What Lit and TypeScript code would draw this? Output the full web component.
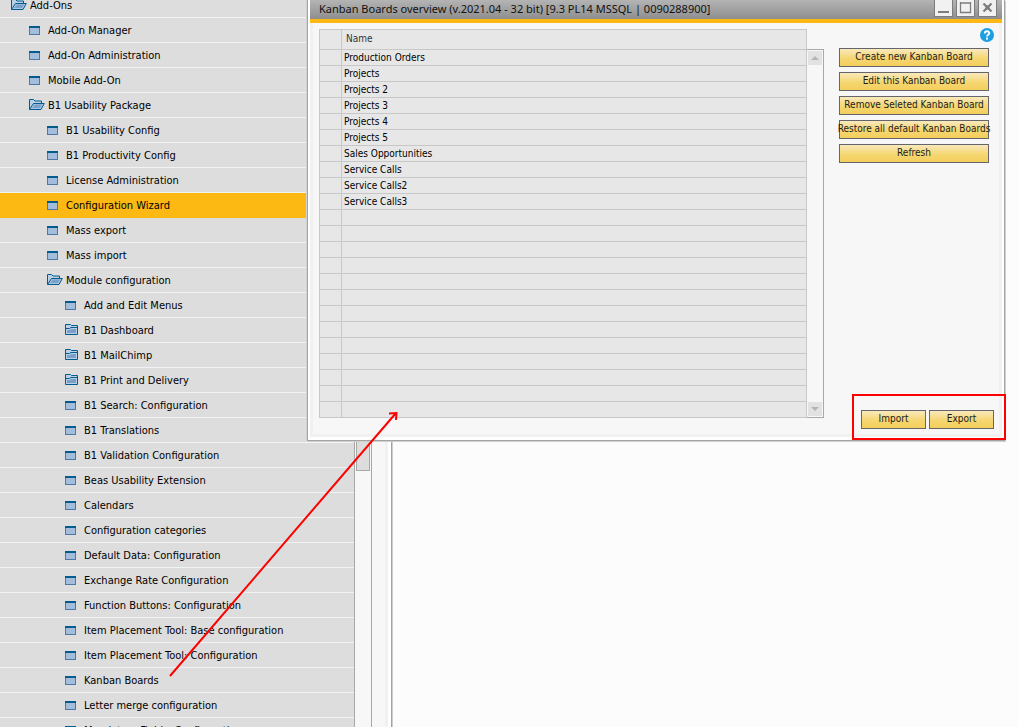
import { LitElement, html, css, svg, nothing } from "lit";
import { customElement, state, property } from "lit/decorators.js";
import { classMap } from "lit/directives/class-map.js";

type Kind = "form" | "folder" | "open";
interface MenuEntry {
  label: string;
  level: number;
  kind: Kind;
}

const entry = (level: number, label: string, kind: Kind = "form"): MenuEntry => ({ level, label, kind });

const MENU: MenuEntry[] = [
  entry(0, "Add-Ons", "open"),
  entry(1, "Add-On Manager"),
  entry(1, "Add-On Administration"),
  entry(1, "Mobile Add-On"),
  entry(1, "B1 Usability Package", "open"),
  entry(2, "B1 Usability Config"),
  entry(2, "B1 Productivity Config"),
  entry(2, "License Administration"),
  entry(2, "Configuration Wizard"),
  entry(2, "Mass export"),
  entry(2, "Mass import"),
  entry(2, "Module configuration", "open"),
  entry(3, "Add and Edit Menus"),
  entry(3, "B1 Dashboard", "folder"),
  entry(3, "B1 MailChimp", "folder"),
  entry(3, "B1 Print and Delivery", "folder"),
  entry(3, "B1 Search: Configuration"),
  entry(3, "B1 Translations"),
  entry(3, "B1 Validation Configuration"),
  entry(3, "Beas Usability Extension"),
  entry(3, "Calendars"),
  entry(3, "Configuration categories"),
  entry(3, "Default Data: Configuration"),
  entry(3, "Exchange Rate Configuration"),
  entry(3, "Function Buttons: Configuration"),
  entry(3, "Item Placement Tool: Base configuration"),
  entry(3, "Item Placement Tool: Configuration"),
  entry(3, "Kanban Boards"),
  entry(3, "Letter merge configuration"),
  entry(3, "Mandatory Fields: Configuration"),
];

const BOARDS = [
  "Production Orders",
  "Projects",
  "Projects 2",
  "Projects 3",
  "Projects 4",
  "Projects 5",
  "Sales Opportunities",
  "Service Calls",
  "Service Calls2",
  "Service Calls3",
];
const GRID_ROWS = 23;

const ICONS = {
  form: svg`<rect x="0.5" y="2.5" width="10" height="8" fill="#a3bedd" stroke="#4f78a5"/>
    <rect x="0" y="2" width="11" height="2" fill="#005b8f"/>`,
  folder: svg`<path d="M0.5 10.5V0.5H5.5L6.5 1.5H12.5V10.5Z" fill="#b9d0e6" stroke="#005b8f"/>
    <path d="M0.5 4.5H4.5L6 3.5H12.5" fill="none" stroke="#005b8f"/>
    <path d="M2 9V6H5L6 5H11V9Z" fill="#7a9fc9"/>`,
  open: svg`<path d="M0.5 10.5V0.5H4.5L6 2H12.5V4" fill="#b9d0e6" stroke="#005b8f"/>
    <path d="M0.5 10.5L4.5 4.5H15.3L12 10.5Z" fill="#a9c6e2" stroke="#005b8f"/>
    <path d="M3 9L6 5.5H13L11 9Z" fill="#7a9fc9"/>`,
};

@customElement("menu-tree")
class MenuTree extends LitElement {
  @state() private selected = "Configuration Wizard";

  static styles = css`
    :host {
      display: block;
      overflow: hidden;
      background: #dddddd;
      font: 11px/22px "DejaVu Sans Condensed", "DejaVu Sans", sans-serif;
    }
    ul {
      list-style: none;
      margin: -7px 0 0;
      padding: 0;
    }
    li {
      border-bottom: 1px solid #f2f2f2;
    }
    button {
      display: flex;
      align-items: center;
      width: 100%;
      height: 24px;
      padding: 0;
      border: 0;
      background: none;
      color: #000;
      font: inherit;
      text-align: left;
      white-space: nowrap;
    }
    span {
      padding-top: 2px;
    }
    .level0 {
      padding-left: 11px;
    }
    .level1 {
      padding-left: 29px;
    }
    .level2 {
      padding-left: 47px;
    }
    .level3 {
      padding-left: 65px;
    }
    .selected {
      background: #fcb813;
      border-color: #fcb813;
    }
    svg {
      width: 16px;
      height: 12px;
      margin-right: 3px;
      flex: none;
    }
  `;

  render() {
    return html`<ul>
      ${MENU.map(
        (m) => html`<li class=${classMap({ selected: m.label === this.selected })}>
          <button type="button" class="level${m.level}" @click=${() => (this.selected = m.label)}>
            <svg viewBox="0 0 16 12" aria-hidden="true">${ICONS[m.kind]}</svg>
            <span>${m.label}</span>
          </button>
        </li>`
      )}
    </ul>`;
  }
}

@customElement("gold-button")
class GoldButton extends LitElement {
  @property() label = "";

  static styles = css`
    :host {
      display: block;
    }
    button {
      display: flex;
      justify-content: center;
      width: 100%;
      height: 19px;
      padding: 0;
      border: 1px solid #66666a;
      background: linear-gradient(#f9e9bd, #f5d670 55%, #f3cf5c);
      color: #1c1c1c;
      font: 10px/16px "DejaVu Sans Condensed", "DejaVu Sans", sans-serif;
      white-space: nowrap;
    }
  `;

  render() {
    return html`<button type="button">${this.label}</button>`;
  }
}

@customElement("board-grid")
class BoardGrid extends LitElement {
  static styles = css`
    :host {
      display: flex;
      color: #000;
      font: 10px/15px "DejaVu Sans Condensed", "DejaVu Sans", sans-serif;
    }
    table {
      flex: 1;
      border-collapse: separate;
      border-spacing: 0;
      border: solid #c8c8c8;
      border-width: 1px 0 0 1px;
      background: #e7e7e7;
      table-layout: fixed;
    }
    th,
    td {
      height: 15px;
      padding: 0 2px;
      border: solid #c8c8c8;
      border-width: 0 1px 1px 0;
      text-align: left;
      font-weight: normal;
    }
    th {
      height: 16px;
      padding: 0 4px 3px;
      color: #333;
    }
    .mark {
      width: 21px;
      padding-left: 0;
      padding-right: 0;
    }
    .scroll {
      display: flex;
      flex-direction: column;
      justify-content: space-between;
      width: 14px;
      margin-top: 20px;
      padding: 1px;
      box-sizing: content-box;
      border: solid #a8a8a8;
      border-width: 1px 1px 1px 0;
      background: #f7f7f7;
    }
    .scroll button {
      display: grid;
      place-items: center;
      height: 14px;
      padding: 0;
      border: 0;
      background: #e2e2e2;
    }
    svg {
      width: 8px;
      height: 4px;
      fill: #b5b5b5;
    }
  `;

  render() {
    return html`<table>
        <thead>
          <tr>
            <th class="mark"></th>
            <th scope="col">Name</th>
          </tr>
        </thead>
        <tbody>
          ${Array.from(
            { length: GRID_ROWS },
            (_, i) => html`<tr>
              <td class="mark"></td>
              <td>${BOARDS[i] ?? nothing}</td>
            </tr>`
          )}
        </tbody>
      </table>
      <div class="scroll">
        <button type="button" aria-label="Scroll up"><svg viewBox="0 0 8 4"><path d="M0 4L4 0L8 4Z" /></svg></button>
        <button type="button" aria-label="Scroll down"><svg viewBox="0 0 8 4"><path d="M0 0L4 4L8 0Z" /></svg></button>
      </div>`;
  }
}

@customElement("board-window")
class BoardWindow extends LitElement {
  static styles = css`
    :host {
      display: block;
      border: solid #a3a3a3;
      border-width: 0 1px 1px;
      box-shadow: 1px 1px 0 #cfcfcf, -1px 0 0 #d2d2d2;
      background: #fff;
      padding: 0 2px 3px;
    }
    header {
      display: flex;
      justify-content: space-between;
      height: 19px;
      padding: 0 5px 0 9px;
      border-bottom: 4px solid #fcb813;
      background: linear-gradient(#b4b4b4, #8e8e8e);
    }
    h1 {
      margin: 0;
      color: #111;
      font: 11px/18px "Noto Sans", sans-serif;
      white-space: nowrap;
    }
    .controls {
      display: flex;
      gap: 3px;
    }
    .controls button {
      width: 19px;
      height: 17px;
      padding: 0;
      border: 1px solid #7d7d7d;
      border-top: 0;
      background: #f1f1f1;
      line-height: 0;
    }
    .controls svg {
      width: 17px;
      height: 16px;
      fill: none;
      stroke: #7d7d7d;
    }
    .body {
      display: flex;
      gap: 15px;
      border: solid #f1f1f1;
      border-width: 0 3px 3px;
      background: #f7f7f7;
      padding: 6px 10px 16px 6px;
    }
    board-grid {
      flex: 1;
    }
    .side {
      display: flex;
      flex-direction: column;
      justify-content: space-between;
      width: 150px;
    }
    .actions {
      display: grid;
      grid-template-columns: minmax(0, 1fr);
      gap: 5px;
    }
    .help {
      justify-self: end;
      width: 14px;
      height: 14px;
      margin: -1px -5px 1px 0;
      padding: 0;
      border: 0;
      border-radius: 50%;
      background: #1b9fe3;
    }
    .help svg {
      display: block;
      width: 14px;
      height: 14px;
    }
    .transfer {
      display: grid;
      grid-template-columns: 65px 65px;
      align-self: end;
      gap: 3px;
      position: relative;
      margin: 0 -5px -11px 0;
    }
    .transfer::after {
      content: "";
      position: absolute;
      inset: -16px -12px -11px -9px;
      border: 2px solid #fe0000;
      pointer-events: none;
    }
  `;

  render() {
    return html`
      <header>
        <h1>Kanban Boards overview (v.2021.04 - 32 bit) [9.3 PL14 MSSQL | 0090288900]</h1>
        <div class="controls">
          <button type="button" aria-label="Minimize">
            <svg viewBox="0 0 17 16"><path d="M3 12H14" stroke-width="2" /></svg>
          </button>
          <button type="button" aria-label="Maximize">
            <svg viewBox="0 0 17 16"><path d="M3.5 2V12.5H13.5V2M3 3H14" stroke-width="1.3" /></svg>
          </button>
          <button type="button" aria-label="Close">
            <svg viewBox="0 0 17 16">
              <path d="M4.5 3.5L12.5 11.5M12.5 3.5L4.5 11.5" stroke-width="2.2" />
              <path d="M6.5 7.5H10.5" stroke-width="4" />
            </svg>
          </button>
        </div>
      </header>
      <div class="body">
        <board-grid></board-grid>
        <div class="side">
          <div class="actions">
            <button type="button" class="help" aria-label="Help">
              <svg viewBox="0 0 14 14">
                <path d="M4.8 5.4C4.8 2.6 9.3 2.6 9.3 5.2C9.3 6.8 7 6.8 7 8.6" fill="none" stroke="#fff" stroke-width="1.9" />
                <rect x="6" y="9.6" width="2" height="2" fill="#fff" />
              </svg>
            </button>
            ${[
              "Create new Kanban Board",
              "Edit this Kanban Board",
              "Remove Seleted Kanban Board",
              "Restore all default Kanban Boards",
              "Refresh",
            ].map((l) => html`<gold-button label=${l}></gold-button>`)}
          </div>
          <div class="transfer">
            <gold-button label="Import"></gold-button>
            <gold-button label="Export"></gold-button>
          </div>
        </div>
      </div>
    `;
  }
}

@customElement("app-root")
class AppRoot extends LitElement {
  static styles = css`
    :host {
      display: flex;
      position: relative;
      height: 100vh;
      overflow: hidden;
      background: #fcfcfc;
    }
    menu-tree {
      width: 354px;
    }
    .track {
      width: 14px;
      padding: 0 1px;
      border: solid #a8a8a8;
      border-width: 0 1px;
      background: #f7f7f7;
    }
    .thumb {
      height: 470px;
      border: 1px solid #a8a8a8;
      border-top: 0;
      background: #dddddd;
    }
    .frame {
      width: 13px;
      border-right: 3px solid #f1f1f1;
      background: #f7f7f7;
    }
    .edge {
      width: 3px;
      border-right: 1px solid #a3a3a3;
      background: #fff;
      box-shadow: 1px 0 0 #cfcfcf;
    }
    board-window {
      position: absolute;
      top: 0;
      left: 307px;
      right: 13px;
    }
    .arrow {
      position: absolute;
      top: 405px;
      left: 160px;
      width: 250px;
      height: 280px;
      fill: none;
      stroke: #fe0000;
      stroke-width: 2;
      pointer-events: none;
    }
  `;

  render() {
    return html`
      <menu-tree></menu-tree>
      <div class="track"><div class="thumb"></div></div>
      <div class="frame"></div>
      <div class="edge"></div>
      <board-window></board-window>
      <svg class="arrow" viewBox="0 0 250 280" aria-hidden="true">
        <path d="M10 271L236 8M229 8.5L236.5 8L236 15" />
      </svg>
    `;
  }
}
